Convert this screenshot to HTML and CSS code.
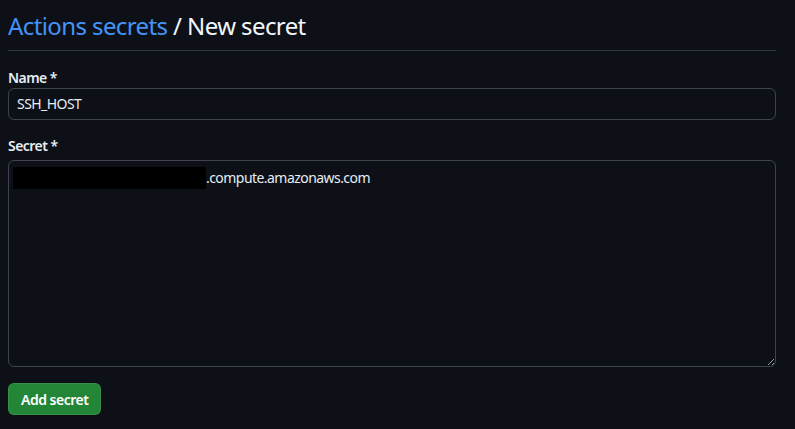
FILE: index.html
```html
<!DOCTYPE html>
<html lang="en">
<head>
<meta charset="utf-8">
<title>New secret</title>
<link rel="stylesheet" href="styles.css">
</head>
<body>
<main class="page">
  <div class="subhead">
    <h2 class="subhead-title"><a class="crumb" href="#">Actions secrets</a> / New secret</h2>
  </div>
  <form class="form">
    <div class="group group-name">
      <label class="label">Name *</label>
      <div class="input">SSH_HOST</div>
    </div>
    <div class="group group-secret">
      <label class="label">Secret *</label>
      <div class="textarea"><span class="redact"></span>.compute.amazonaws.com</div>
    </div>
    <button class="btn" type="button">Add secret</button>
  </form>
</main>
</body>
</html>
```

FILE: styles.css
```css
html, body {
  margin: 0;
  background: #0d1117;
}
body {
  padding: 8px;
  font-family: "Noto Sans", "Open Sans", sans-serif;
  color: #e6edf3;
  font-size: 14px;
  letter-spacing: -0.55px;
}
.page {
  width: 768px;
}
.subhead {
  border-bottom: 1px solid #30363d;
  padding-bottom: 6px;
}
.subhead-title {
  margin: 0;
  font-size: 24px;
  font-weight: 400;
  line-height: 36px;
  letter-spacing: -0.6px;
  color: #f0f6fc;
}
.crumb {
  color: #4493f8;
  text-decoration: none;
}
.form {
  display: flex;
  flex-direction: column;
}
.group {
  display: flex;
  flex-direction: column;
}
.group-name {
  margin-top: 17px;
}
.group-secret {
  margin-top: 16px;
}
.label {
  font-weight: 600;
  line-height: 20px;
}
.group-secret .label {
  margin-bottom: 4px;
}
.input {
  box-sizing: border-box;
  height: 32px;
  border: 1px solid #3d444d;
  border-radius: 6px;
  padding: 0 8px;
  line-height: 30px;
}
.textarea {
  box-sizing: border-box;
  height: 207px;
  border: 1px solid #3d444d;
  border-radius: 6px;
  padding: 6px 4px;
  line-height: 22px;
  resize: vertical;
  overflow: auto;
}
.redact {
  display: inline-block;
  width: 193px;
  height: 22px;
  background: #000;
  vertical-align: top;
}
.btn {
  align-self: flex-start;
  margin-top: 16px;
  height: 32px;
  padding: 0 12px;
  background: #238636;
  color: #ffffff;
  border: 1px solid rgba(240, 246, 252, 0.1);
  border-radius: 6px;
  font-family: inherit;
  font-size: 14px;
  font-weight: 600;
  letter-spacing: -0.5px;
}
```
